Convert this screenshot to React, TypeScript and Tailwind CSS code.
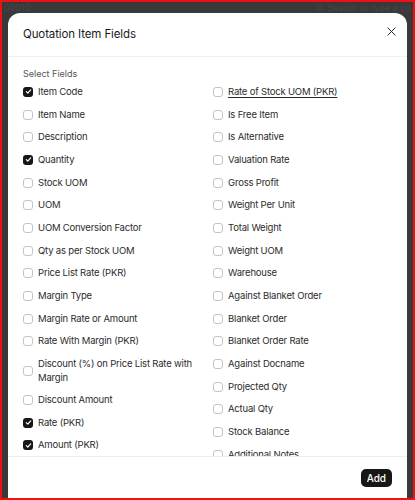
import React from "react";

const left: { label: string; checked?: boolean }[] = [
  { label: "Item Code", checked: true },
  { label: "Item Name" },
  { label: "Description" },
  { label: "Quantity", checked: true },
  { label: "Stock UOM" },
  { label: "UOM" },
  { label: "UOM Conversion Factor" },
  { label: "Qty as per Stock UOM" },
  { label: "Price List Rate (PKR)" },
  { label: "Margin Type" },
  { label: "Margin Rate or Amount" },
  { label: "Rate With Margin (PKR)" },
  { label: "Discount (%) on Price List Rate with Margin" },
  { label: "Discount Amount" },
  { label: "Rate (PKR)", checked: true },
  { label: "Amount (PKR)", checked: true },
];

const right: string[] = [
  "Rate of Stock UOM (PKR)",
  "Is Free Item",
  "Is Alternative",
  "Valuation Rate",
  "Gross Profit",
  "Weight Per Unit",
  "Total Weight",
  "Weight UOM",
  "Warehouse",
  "Against Blanket Order",
  "Blanket Order",
  "Blanket Order Rate",
  "Against Docname",
  "Projected Qty",
  "Actual Qty",
  "Stock Balance",
  "Additional Notes",
];

function Box({ checked }: { checked?: boolean }) {
  if (checked) {
    return (
      <span className="flex h-[10px] w-[10px] shrink-0 items-center justify-center rounded-[3px] bg-[#171717]">
        <svg width="7" height="7" viewBox="0 0 8 8" fill="none">
          <path d="M1.5 4.2 L3.2 5.8 L6.5 2.2" stroke="white" strokeWidth="1.4" strokeLinecap="round" strokeLinejoin="round" />
        </svg>
      </span>
    );
  }
  return <span className="h-[10px] w-[10px] shrink-0 rounded-[3px] border border-[#c4c4c4] bg-white" />;
}

function Row({ label, checked, underline }: { label: string; checked?: boolean; underline?: boolean }) {
  return (
    <div className="flex min-h-[22.7px] items-center gap-[5px] py-[4px]">
      <Box checked={checked} />
      <span
        className={
          "text-[9.5px] leading-[14px] tracking-[-0.02em] text-[#2c2c2c] " +
          (underline ? "underline underline-offset-2" : "")
        }
      >
        {label}
      </span>
    </div>
  );
}

export default function App() {
  return (
    <div
      className="flex h-[500px] w-[415px] flex-col overflow-hidden border-2 border-[#ee1111] bg-[#393939]"
      style={{ fontFamily: "Inter, 'Noto Sans', sans-serif" }}
    >
      <div className="flex h-[10.5px] shrink-0 items-start justify-between overflow-hidden pt-[1px]">
        <span className="pl-[2px] text-[9px] leading-[10px] text-[#474747]">00010</span>
        <span className="flex items-center gap-[4px] pr-[2px] text-[9px] leading-[10px] text-[#474747]">
          <svg width="8" height="8" viewBox="0 0 10 10" fill="none">
            <circle cx="4.2" cy="4.2" r="3.2" stroke="#474747" strokeWidth="1.2" />
            <path d="M6.6 6.6 L9 9" stroke="#474747" strokeWidth="1.2" />
          </svg>
          Search or type a co
        </span>
      </div>
      <div className="ml-[6px] flex w-[399px] flex-1 flex-col overflow-hidden rounded-t-[12px] bg-white">
        <div className="flex h-[44px] shrink-0 items-center justify-between border-b border-[#f0f0f0] pl-[15px] pr-[11px]">
          <span className="mt-[2px] text-[11.5px] tracking-[-0.01em] text-[#1a1a1a]">Quotation Item Fields</span>
          <svg width="9" height="9" viewBox="0 0 10 10" className="mb-[5px]">
            <path d="M1 1 L9 9 M9 1 L1 9" stroke="#222" strokeWidth="1.1" strokeLinecap="round" />
          </svg>
        </div>
        <div className="h-[399.5px] shrink-0 overflow-hidden px-[15px] pt-[10px]">
          <div className="text-[9px] leading-[14px] text-[#555]">Select Fields</div>
          <div className="grid grid-cols-2 gap-x-[11px]">
            <div className="flex flex-col">
              {left.map((r) => (
                <Row key={r.label} label={r.label} checked={r.checked} />
              ))}
            </div>
            <div className="flex flex-col">
              {right.map((r, i) => (
                <Row key={r} label={r} underline={i === 0} />
              ))}
            </div>
          </div>
        </div>
        <div className="flex flex-1 items-start justify-end border-t border-[#ededed] pr-[15px] pt-[12px]">
          <button className="h-[18px] rounded-[5px] bg-[#171717] px-[6px] text-[10px] font-medium leading-[18px] text-white">
            Add
          </button>
        </div>
      </div>
    </div>
  );
}
